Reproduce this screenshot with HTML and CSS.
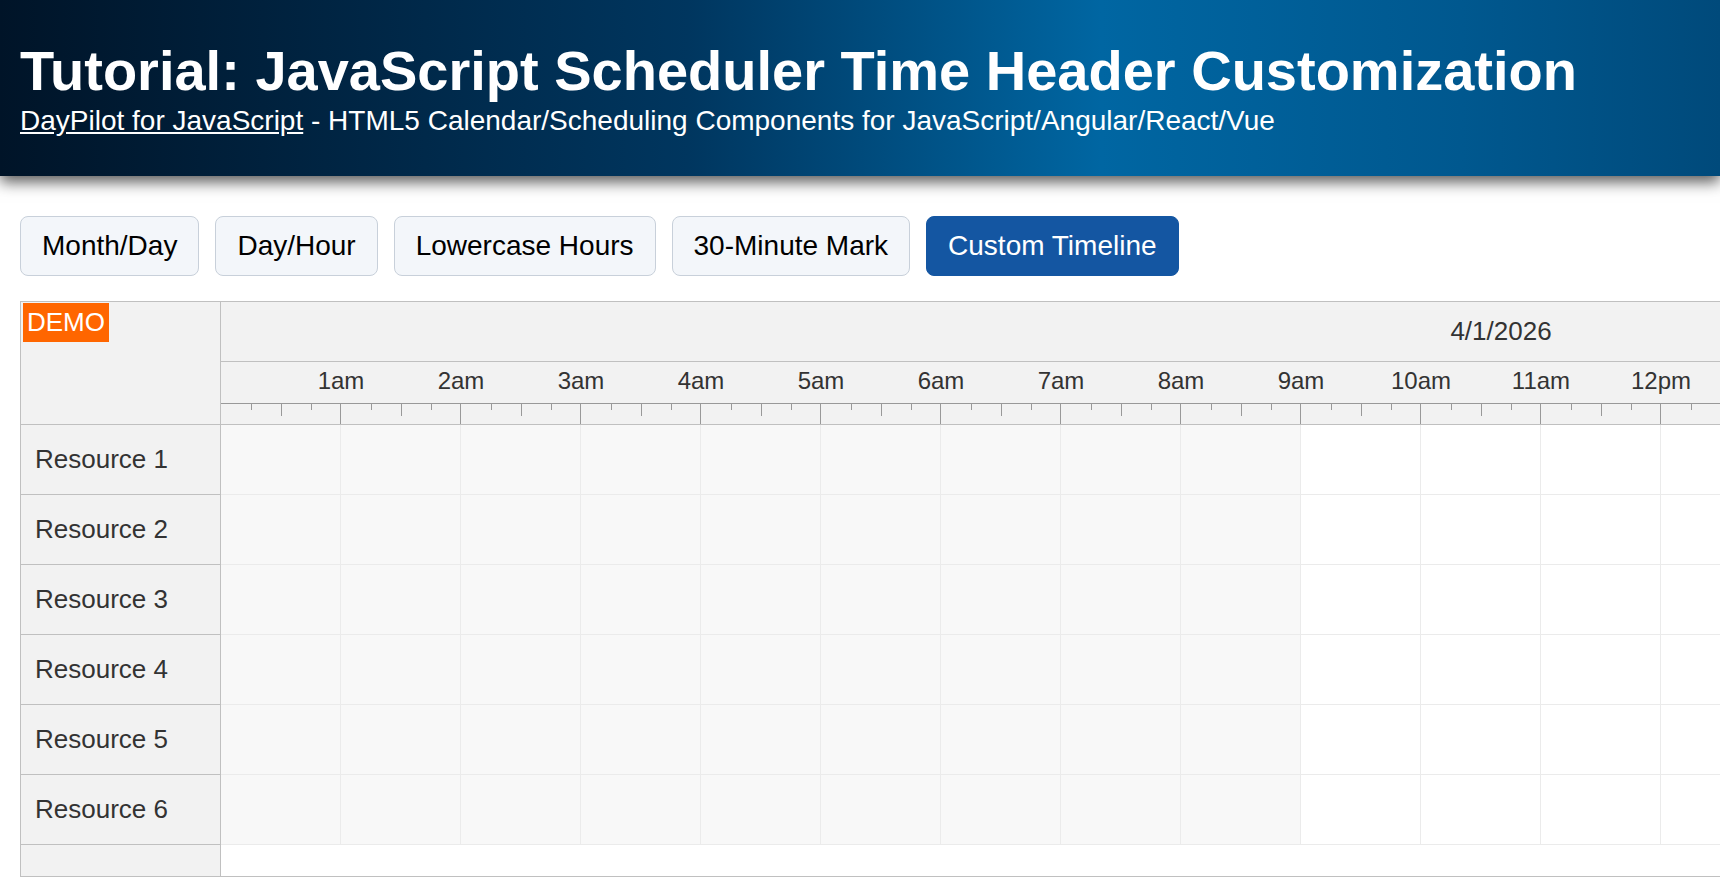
FILE: index.html
```html
<!DOCTYPE html>
<html lang="en">
<head>
    <meta charset="UTF-8">
    <title>Tutorial: JavaScript Scheduler Time Header Customization</title>
    <link rel="stylesheet" href="styles.css">
</head>
<body>
    <div class="header">
        <h1>Tutorial: JavaScript Scheduler Time Header Customization</h1>
        <div class="subtitle"><a href="#">DayPilot for JavaScript</a> - HTML5 Calendar/Scheduling Components for JavaScript/Angular/React/Vue</div>
    </div>

    <div class="main">
        <div class="toolbar">
            <button>Month/Day</button>
            <button>Day/Hour</button>
            <button>Lowercase Hours</button>
            <button>30-Minute Mark</button>
            <button class="selected">Custom Timeline</button>
        </div>

        <div class="scheduler">
            <div class="corner"><span class="demo">DEMO</span></div>

            <div class="timeheader">
                <div class="th-date">4/1/2026</div>
                <div class="th-hours">
                    <span>1am</span>
                    <span>2am</span>
                    <span>3am</span>
                    <span>4am</span>
                    <span>5am</span>
                    <span>6am</span>
                    <span>7am</span>
                    <span>8am</span>
                    <span>9am</span>
                    <span>10am</span>
                    <span>11am</span>
                    <span>12pm</span>
                </div>
                <div class="th-ticks"></div>
            </div>

            <div class="rowheaders">
                <div class="rh">Resource 1</div>
                <div class="rh">Resource 2</div>
                <div class="rh">Resource 3</div>
                <div class="rh">Resource 4</div>
                <div class="rh">Resource 5</div>
                <div class="rh">Resource 6</div>
            </div>

            <div class="cells">
                <div class="row"></div>
                <div class="row"></div>
                <div class="row"></div>
                <div class="row"></div>
                <div class="row"></div>
                <div class="row"></div>
            </div>
        </div>
    </div>
</body>
</html>
```

FILE: styles.css
```css
body {
    margin: 0;
    font-family: "Liberation Sans", Arial, sans-serif;
    background: #fff;
    overflow: hidden;
}

/* page header */
.header {
    padding: 40px 20px 39px 20px;
    color: #fff;
    background: linear-gradient(to right, #001428 0%, #00365f 40%, #0066a2 64%, #00588f 85%, #004a7b 100%);
    box-shadow: 0 6px 14px rgba(0, 0, 0, 0.65);
}
.header h1 {
    margin: 0 0 3px 0;
    font-size: 56px;
    line-height: 62px;
    font-weight: bold;
}
.subtitle {
    font-size: 28px;
}
.subtitle a {
    color: #fff;
}

.main {
    padding: 40px 0 0 20px;
}

/* view switcher */
.toolbar {
    display: flex;
    gap: 16px;
    margin-bottom: 25px;
}
.toolbar button {
    font-family: inherit;
    font-size: 28px;
    padding: 13px 21px;
    color: #000;
    background: #f3f6fa;
    border: 1px solid #c8d0da;
    border-radius: 8px;
    cursor: pointer;
}
.toolbar button.selected {
    color: #fff;
    background: #1456a2;
    border-color: #1456a2;
}

/* scheduler */
.scheduler {
    width: 2760px;
    display: grid;
    grid-template-columns: 200px 1fr;
    grid-template-rows: 123px 451px;
    border: 1px solid #c0c0c0;
    color: #333;
    font-size: 26px;
}
.corner {
    position: relative;
    background: #f2f2f2;
    border-right: 1px solid #c0c0c0;
    border-bottom: 1px solid #c0c0c0;
}
.demo {
    position: absolute;
    left: 2px;
    top: 1px;
    padding: 4px 4px;
    background: #ff6600;
    color: #fff;
}

.timeheader {
    background: #f2f2f2;
    border-bottom: 1px solid #c0c0c0;
    overflow: hidden;
}
.th-date {
    height: 59px;
    border-bottom: 1px solid #c0c0c0;
    display: flex;
    align-items: center;
    justify-content: center;
}
.th-hours {
    height: 37px;
    padding-bottom: 4px;
    border-bottom: 1px solid #999;
    display: flex;
    align-items: center;
    padding-left: 60px;
    font-size: 24px;
}
.th-hours span {
    flex: 0 0 120px;
    text-align: center;
}
.th-ticks {
    height: 20px;
    background:
        repeating-linear-gradient(to right, transparent 0 119px, #999 119px 120px),
        repeating-linear-gradient(to right, transparent 0 60px, #999 60px 61px, transparent 61px 120px) top left / 100% 12px no-repeat,
        repeating-linear-gradient(to right, transparent 0 30px, #999 30px 31px, transparent 31px 60px) top left / 100% 6px no-repeat;
}

.rowheaders {
    background: #f2f2f2;
    border-right: 1px solid #c0c0c0;
}
.rh {
    height: 70px;
    box-sizing: border-box;
    border-bottom: 1px solid #c0c0c0;
    padding-left: 14px;
    display: flex;
    align-items: center;
}

.cells {
    background: #fff;
}
.row {
    height: 70px;
    box-sizing: border-box;
    border-bottom: 1px solid #ebebeb;
    background:
        repeating-linear-gradient(to right, transparent 0 119px, #ebebeb 119px 120px),
        linear-gradient(to right, #f8f8f8 1080px, #fff 1080px);
}
```
